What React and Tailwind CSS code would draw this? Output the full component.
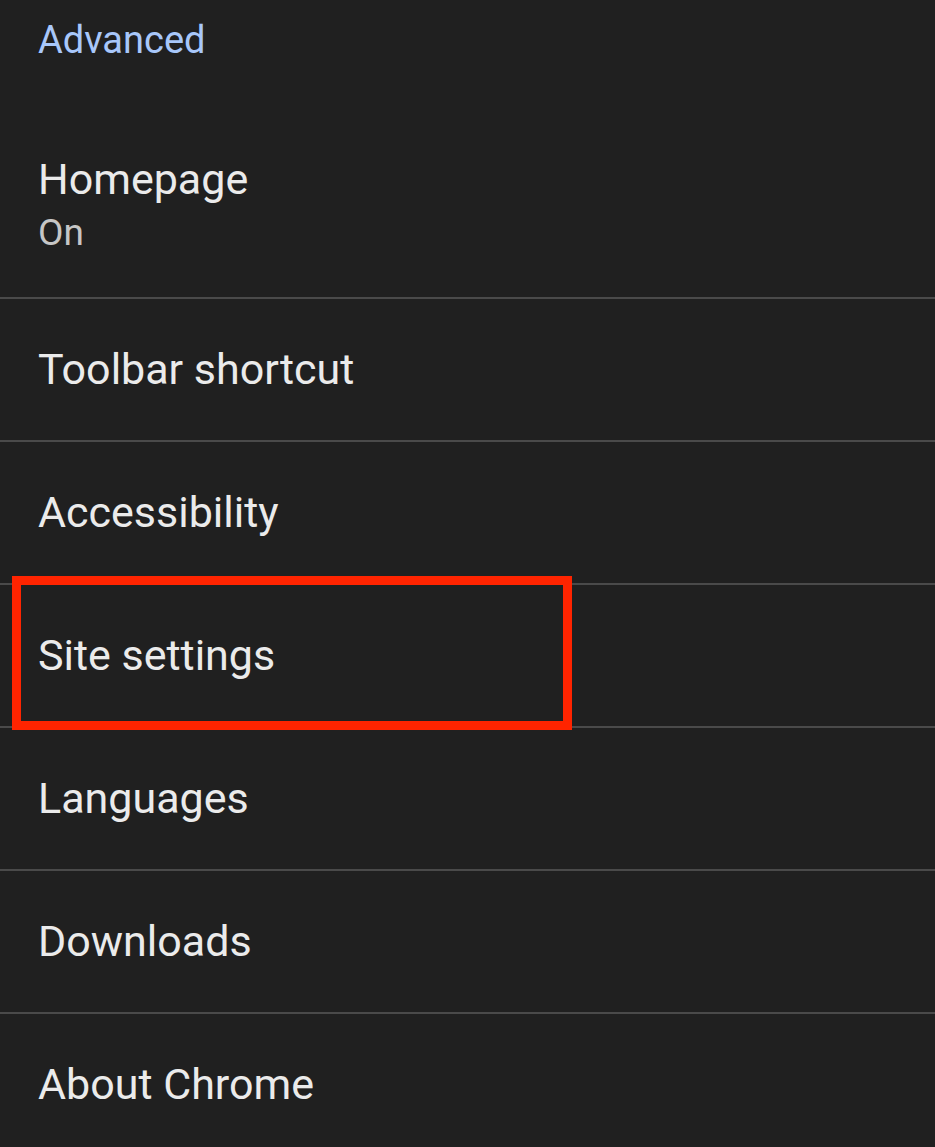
export default function App() {
  const rows = ["Toolbar shortcut", "Accessibility", "Site settings", "Languages", "Downloads", "About Chrome"];
  return (
    <div className="w-[935px] h-[1147px] overflow-hidden bg-[#202020]" style={{ fontFamily: "Roboto, 'Open Sans', sans-serif" }}>
      <div className="h-[92px] pt-[19px] pl-[38px] text-[38px] leading-[42px] text-[#a8c7fa]">Advanced</div>
      <div className="h-[205px] pt-[61px] pl-[38px]">
        <div className="text-[43px] leading-[52px] text-[#ebebeb]">Homepage</div>
        <div className="text-[37px] leading-[56px] text-[#c6c6c6]">On</div>
      </div>
      {rows.map((r) => (
        <div key={r}>
          <div className="h-[2px] bg-[#4a4a4a]" />
          <div className="relative h-[141px] flex items-center pl-[38px] text-[43px] text-[#ebebeb]">
            {r}
            {r === "Site settings" && (
              <div className="absolute left-[12px] top-[-9px] w-[560px] h-[154px] border-[9px] border-[#ff2400]" />
            )}
          </div>
        </div>
      ))}
    </div>
  );
}
